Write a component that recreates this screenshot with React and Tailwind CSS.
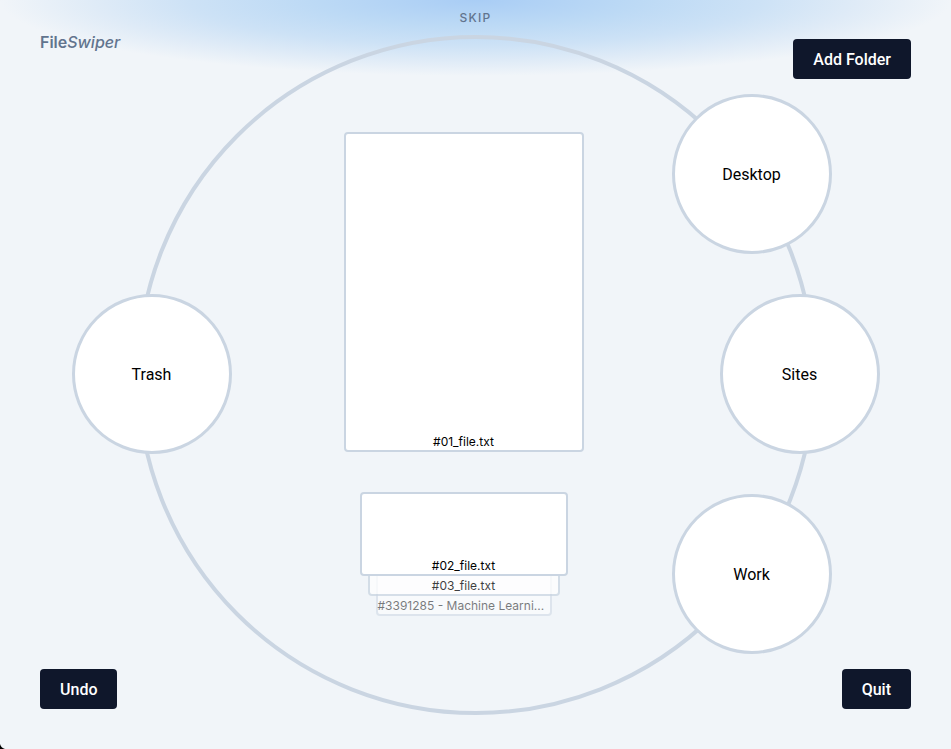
const labelClass = "pt-0.5 font-['Roboto','Inter',sans-serif] text-[16px] leading-6";
const buttonClass = `h-10 rounded bg-slate-900 px-5 font-medium text-white ${labelClass}`;

function Folder({ name, className = "" }) {
  return (
    <button
      type="button"
      className={`flex size-40 shrink-0 items-center justify-center rounded-full border-3 border-slate-300 bg-white text-black ${labelClass} ${className}`}
    >
      {name}
    </button>
  );
}

function FileCard({ name, className }) {
  return (
    <div
      className={`flex flex-col justify-end rounded border-2 border-slate-300 bg-white text-[12px] leading-4 text-black ${className}`}
    >
      <p className="whitespace-nowrap">{name}</p>
    </div>
  );
}

export default function App() {
  return (
    <div className="grid min-h-screen overflow-hidden bg-slate-100 font-['Inter','Liberation_Sans',sans-serif]">
      <div className="col-start-1 row-start-1 h-19 bg-[radial-gradient(50%_100%_at_50%_0,#a9cdf5_0%,#bddaf5_35%,#cde2f6_60%,#dfebf7_80%,#f1f5f9_100%)]" />

      <div className="col-start-1 row-start-1 flex items-center justify-center">
        <div className="aspect-square h-[calc(100vh-69px)] rounded-full border-4 border-slate-300" />
      </div>

      <main className="z-10 col-start-1 row-start-1 flex items-center justify-center pb-px">
        <Folder name="Trash" className="mr-28" />
        <section className="mr-22 flex w-60 shrink-0 flex-col items-center">
          <FileCard name="#01_file.txt" className="mb-10 h-80 w-60 text-center" />
          <FileCard name="#02_file.txt" className="z-30 h-21 w-52 text-center" />
          <FileCard name="#03_file.txt" className="z-20 -mt-10 h-15 w-48 text-center opacity-75" />
          <FileCard name="#3391285 - Machine Learni..." className="z-10 -mt-10 h-15 w-44 text-left opacity-50" />
        </section>
        <section className="flex w-52 shrink-0 flex-col gap-10">
          <Folder name="Desktop" />
          <Folder name="Sites" className="self-end" />
          <Folder name="Work" />
        </section>
      </main>

      <header className="z-20 col-start-1 row-start-1 grid grid-cols-3 items-start self-start px-10">
        <h1 className="pt-[30px] text-[16px] leading-6 font-semibold text-slate-500">
          File<em className="font-medium italic">Swiper</em>
        </h1>
        <p className="pt-[10px] text-center text-[12px] leading-4 font-medium tracking-widest text-slate-500">
          SKIP
        </p>
        <button type="button" className={`mt-[39px] justify-self-end ${buttonClass}`}>
          Add Folder
        </button>
      </header>

      <footer className="z-20 col-start-1 row-start-1 flex justify-between self-end px-10 pb-10">
        <button type="button" className={buttonClass}>Undo</button>
        <button type="button" className={buttonClass}>Quit</button>
      </footer>

      <svg
        className="z-20 col-start-1 row-start-1 size-[5px] self-end text-black"
        viewBox="0 0 5 5"
        aria-hidden="true"
      >
        <path d="M0 0Q1 4 5 5H0Z" fill="currentColor" />
      </svg>
    </div>
  );
}
